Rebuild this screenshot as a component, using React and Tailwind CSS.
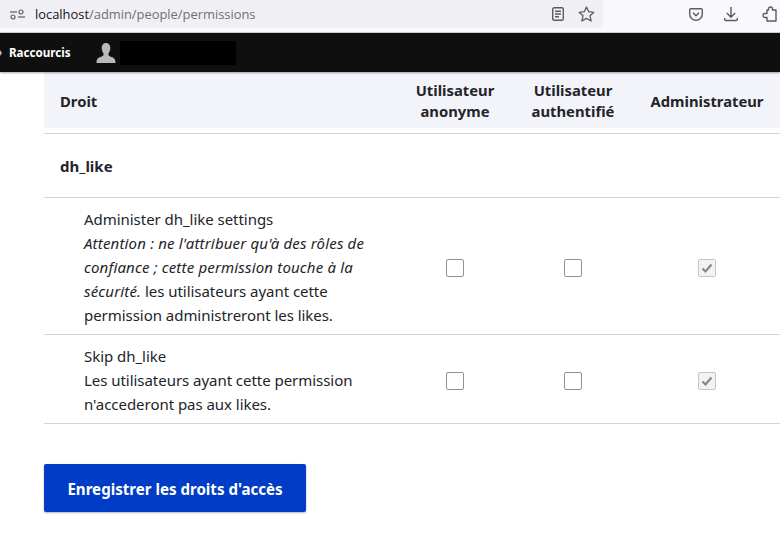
import React from "react";

const rows = [
  {
    name: "Administer dh_like settings",
    warning: "Attention : ne l'attribuer qu'à des rôles de confiance ; cette permission touche à la sécurité.",
    description: "les utilisateurs ayant cette permission administreront les likes.",
    height: "h-[137px]",
  },
  {
    name: "Skip dh_like",
    description: "Les utilisateurs ayant cette permission n'accederont pas aux likes.",
    height: "h-[89px]",
  },
];

const EmptyBox = () => (
  <div className="w-[18px] h-[18px] rounded-[2px] border border-[#8e929c] bg-white" />
);

const CheckedBox = () => (
  <div className="w-[18px] h-[18px] rounded-[2px] border border-[#c4c5c9] bg-[#f2f2f3] flex items-center justify-center">
    <svg width="12" height="12" viewBox="0 0 12 12" fill="none">
      <path d="M1.5 6.5 L4.5 9.5 L10.5 2.5" stroke="#85868c" strokeWidth="2.2" />
    </svg>
  </div>
);

const BrowserBar = () => (
  <div className="h-[33px] bg-[#f9f9fb] border-b border-[#cfcfd8] flex text-[#5b5b66]">
    <div className="w-[603px] h-[28px] bg-[#f0f0f4] rounded-br-[6px] flex items-center">
      <svg className="ml-[10px]" width="15" height="12" viewBox="0 0 15 12" fill="none" stroke="#5b5b66" strokeWidth="1.2">
        <path d="M0 4 H7" />
        <circle cx="11" cy="4" r="2" />
        <path d="M8 9 H15" />
        <circle cx="3" cy="9" r="2" />
      </svg>
      <div className="ml-[10px] text-[12.9px] text-[#6f6f78] font-['Open_Sans','Noto_Sans',sans-serif]">
        <span className="text-[#15141a]">localhost</span>/admin/people/permissions
      </div>
      <svg className="ml-auto" width="12" height="14" viewBox="0 0 12 14" fill="none" stroke="#5b5b66" strokeWidth="1.4">
        <rect x="0.7" y="0.7" width="10.6" height="12.6" rx="1.6" />
        <path d="M3 4.2 H9 M3 7 H9 M3 9.8 H7" />
      </svg>
      <svg className="ml-[14px] mr-[8px]" width="17" height="16" viewBox="0 0 17 16" fill="none" stroke="#5b5b66" strokeWidth="1.3" strokeLinejoin="round">
        <path d="M8.5 1 L10.7 5.7 L15.9 6.3 L12 9.8 L13.1 15 L8.5 12.4 L3.9 15 L5 9.8 L1.1 6.3 L6.3 5.7 Z" />
      </svg>
    </div>
    <div className="flex-1 h-[28px] flex items-center">
      <svg className="ml-[86px]" width="14" height="13" viewBox="0 0 14 13" fill="none" stroke="#5b5b66" strokeWidth="1.4">
        <path d="M2 .7 H12 A1.3 1.3 0 0 1 13.3 2 V6 A6.3 6.3 0 0 1 .7 6 V2 A1.3 1.3 0 0 1 2 .7 Z" />
        <path d="M4 4.8 L7 7.8 L10 4.8" />
      </svg>
      <svg className="ml-[21px]" width="14" height="15" viewBox="0 0 14 15" fill="none" stroke="#5b5b66" strokeWidth="1.4">
        <path d="M7 0 V10 M2.8 6 L7 10.2 L11.2 6 M.7 11 V12.5 A1 1 0 0 0 1.7 13.5 H12.3 A1 1 0 0 0 13.3 12.5 V11" />
      </svg>
      <svg className="ml-[24px]" width="15" height="16" viewBox="0 0 15 16" fill="none" stroke="#5b5b66" strokeWidth="1.4" strokeLinejoin="round">
        <path d="M6.5 4 V3 A2 2 0 0 1 10.5 3 V4 H14 V15 H5 V11.5 H3 A2 2 0 0 1 3 7.5 H5 V4 Z" />
      </svg>
    </div>
  </div>
);

const Toolbar = () => (
  <div className="h-[39px] bg-[#0f0f0f] flex items-center shadow-[0_1px_2px_rgba(0,0,0,0.35)] relative">
    <svg width="2" height="6" viewBox="0 0 2 6" fill="#b9b9b9">
      <path d="M0 0 L2 3 L0 6 Z" />
    </svg>
    <div className="ml-[7px] text-[11.6px] font-bold text-white">Raccourcis</div>
    <svg className="ml-[25px]" width="20" height="20" viewBox="0 0 20 20" fill="#b9b9b9">
      <path d="M10 0 C13 0 14.5 2.5 14.3 5.5 C14.1 8 13 9.8 12.3 11 C12.3 12.5 13.5 13.2 15.5 14 C18 15 19.5 15.8 19.5 20 H.5 C.5 15.8 2 15 4.5 14 C6.5 13.2 7.7 12.5 7.7 11 C7 9.8 5.9 8 5.7 5.5 C5.5 2.5 7 0 10 0 Z" />
    </svg>
    <div className="ml-[4px] w-[116px] h-[24px] bg-black" />
  </div>
);

export default function App() {
  return (
    <div className="w-[780px] h-[535px] overflow-hidden bg-white text-[15px] leading-[24px] text-[#232429] font-['Noto_Sans',sans-serif]">
      <BrowserBar />
      <Toolbar />
      <div className="w-[738px] ml-[44px]">
        <div className="grid grid-cols-[352px_118px_118px_150px] h-[56px] pt-[2px] bg-[#f3f4f9] items-center font-bold leading-[21px] text-[14.8px] text-center">
          <div className="pl-[16px] text-left">Droit</div>
          <div>Utilisateur<br />anonyme</div>
          <div>Utilisateur<br />authentifié</div>
          <div>Administrateur</div>
        </div>
        <div className="mt-[5px] h-[65px] pt-[1px] border-y border-[#d3d4d9] pl-[16px] flex items-center font-bold text-[15px]">
          dh_like
        </div>
        {rows.map((row) => (
          <div
            key={row.name}
            className={`grid grid-cols-[352px_118px_118px_150px] items-center pt-[2px] border-b border-[#d3d4d9] ${row.height}`}
          >
            <div className="pl-[40px] pr-[24px] tracking-[-0.04px]">
              <div>{row.name}</div>
              <div>
                {row.warning && <em className="tracking-[0.17px]">{row.warning}</em>}
                {row.warning && " "}
                {row.description}
              </div>
            </div>
            <div className="flex justify-center pt-[2px]"><EmptyBox /></div>
            <div className="flex justify-center pt-[2px]"><EmptyBox /></div>
            <div className="flex justify-center pt-[2px]"><CheckedBox /></div>
          </div>
        ))}
        <button className="mt-[40px] w-[262px] h-[48px] pt-[1px] rounded-[2px] bg-[#003cc5] text-white font-bold text-[15.1px] shadow-[0_1px_2px_rgba(0,0,0,0.3)]">
          Enregistrer les droits d'accès
        </button>
      </div>
    </div>
  );
}
